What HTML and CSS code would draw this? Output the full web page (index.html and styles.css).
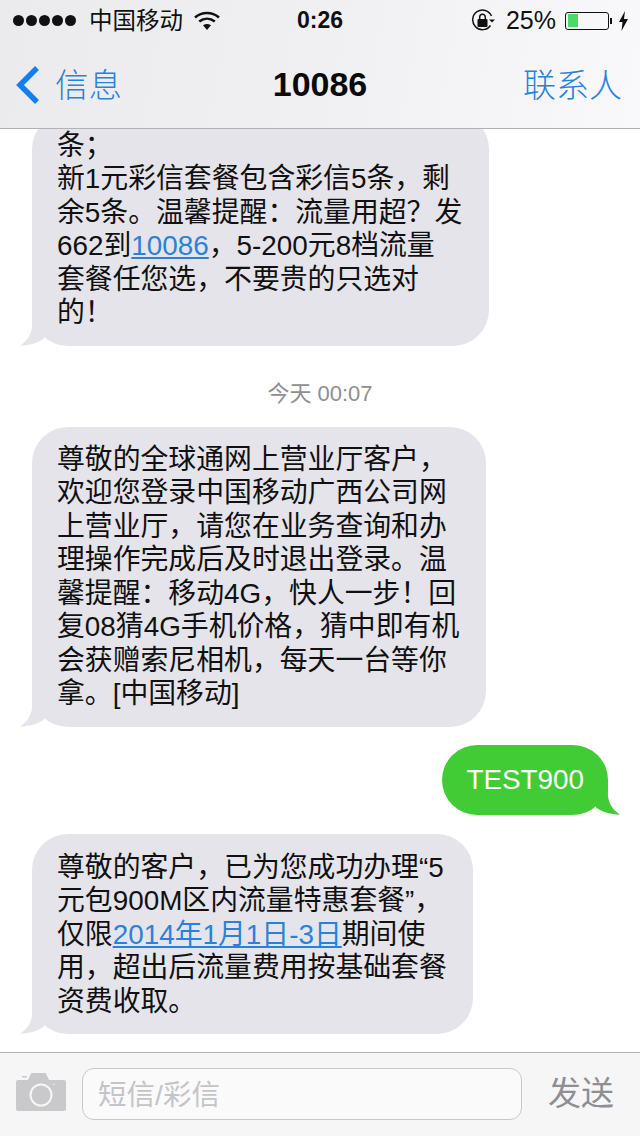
FILE: index.html
```html
<!DOCTYPE html>
<html lang="zh">
<head>
<meta charset="utf-8">
<title>10086</title>
<link rel="stylesheet" href="styles.css">
</head>
<body>
<div class="screen">
  <header class="top">
    <div class="status">
      <div class="status-left">
        <div class="dots"><i></i><i></i><i></i><i></i><i></i></div>
        <span class="carrier">中国移动</span>
        <svg class="wifi" width="26" height="20" viewBox="0 0 26 20"><path d="M1 6.500C8 .5 18 .5 25 6.500" fill="none" stroke="#111" stroke-width="2.600"/><path d="M5.200 10.600c4.800-3.900 10.800-3.900 15.600 0" fill="none" stroke="#111" stroke-width="2.600"/><path d="M9 14.200c2.600-1.700 5.400-1.700 8 0L13 19z" fill="#111"/></svg>
      </div>
      <span class="time">0:26</span>
      <div class="status-right">
        <svg class="lock" width="24" height="24" viewBox="0 0 24 24"><path d="M19.500 16.500A9.800 9.800 0 1 1 20.500 7" fill="none" stroke="#111" stroke-width="1.500"/><path d="M18 10.500h6l-3 3z" fill="#111"/><rect x="6.500" y="10" width="10" height="8" rx="1" fill="#111"/><path d="M8.700 10V8a2.800 2.800 0 0 1 5.600 0v2" fill="none" stroke="#111" stroke-width="1.500"/></svg>
        <span class="percent">25%</span>
        <div class="battery"><div class="battery-level"></div></div>
        <div class="battery-tip"></div>
        <svg class="bolt" width="9" height="20" viewBox="0 0 9 20"><path d="M6 0 0 11h3.500L2.500 20 9 8H5z" fill="#111"/></svg>
      </div>
    </div>
    <nav class="nav">
      <div class="back">
        <svg width="28" height="40" viewBox="0 0 28 40"><path d="M23 3 6 20l17 17" fill="none" stroke="#127ff0" stroke-width="5.500"/></svg>
        <span>信息</span>
      </div>
      <div class="title">10086</div>
      <div class="contact">联系人</div>
    </nav>
  </header>

  <main class="thread">
    <div class="bubble in">条；<br>新1元彩信套餐包含彩信5条，剩<br>余5条。温馨提醒：流量用超？发<br>662到<a>10086</a>，5-200元8档流量<br>套餐任您选，不要贵的只选对<br>的！
      <svg class="tail tail-in" width="26" height="36" viewBox="0 0 26 36"><path d="M12 0V12C13 22 8 31 0 35.500 9 35.500 18 33 24 28.500V0z"/></svg>
    </div>
    <div class="stamp">今天 00:07</div>
    <div class="bubble in gap">尊敬的全球通网上营业厅客户，<br>欢迎您登录中国移动广西公司网<br>上营业厅，请您在业务查询和办<br>理操作完成后及时退出登录。温<br>馨提醒：移动4G，快人一步！回<br>复08猜4G手机价格，猜中即有机<br>会获赠索尼相机，每天一台等你<br>拿。[中国移动]
      <svg class="tail tail-in" width="26" height="36" viewBox="0 0 26 36"><path d="M12 0V12C13 22 8 31 0 35.500 9 35.500 18 33 24 28.500V0z"/></svg>
    </div>
    <div class="bubble out">TEST900
      <svg class="tail tail-out" width="26" height="36" viewBox="0 0 26 36"><path d="M14 0V12C13 22 18 31 26 35.500 17 35.500 8 33 2 28.500V0z"/></svg>
    </div>
    <div class="bubble in last">尊敬的客户，已为您成功办理“5<br>元包900M区内流量特惠套餐”，<br>仅限<a>2014年1月1日-3日</a>期间使<br>用，超出后流量费用按基础套餐<br>资费收取。
      <svg class="tail tail-in" width="26" height="36" viewBox="0 0 26 36"><path d="M12 0V12C13 22 8 31 0 35.500 9 35.500 18 33 24 28.500V0z"/></svg>
    </div>
  </main>

  <footer class="composer">
    <svg class="camera" width="50" height="38" viewBox="0 0 50 38"><path fill-rule="evenodd" fill="#c9c9cb" d="M6 3h5v1.500H6zM2 7h10l3-6.500q.3-.5 1-.5h13q.7 0 1 .5L33 7h15a2 2 0 0 1 2 2v27a2 2 0 0 1-2 2H2a2 2 0 0 1-2-2V9a2 2 0 0 1 2-2zM25 10.500a11.500 11.500 0 1 0 0 23 11.500 11.500 0 0 0 0-23zM25 12.500a9.500 9.500 0 1 1 0 19 9.500 9.500 0 0 1 0-19zM38 10.500a.8.8 0 1 0 0 1.600.8.8 0 0 0 0-1.600z"/></svg>
    <div class="field">短信/彩信</div>
    <div class="send">发送</div>
  </footer>
</div>
</body>
</html>
```
FILE: styles.css
```css
* { box-sizing: border-box; }
html, body { margin: 0; padding: 0; background: #fff; }
body { font-family: "Liberation Sans", "Noto Sans CJK SC", sans-serif; }
.screen { width: 640px; height: 1136px; display: flex; flex-direction: column; overflow: hidden; background: #fff; }

.top { height: 129px; flex: none; position: relative; z-index: 2; background: linear-gradient(100deg, #ebebed 0%, #f0f0f2 50%, #f9f9fb 100%); border-bottom: 1px solid #b2b2b4; }
.status { height: 41px; display: flex; align-items: center; justify-content: space-between; position: relative; padding: 0 12px 0 13px; color: #111; }
.status-left, .status-right { display: flex; align-items: center; }
.dots { display: flex; gap: 2px; margin-right: 13px; }
.dots i { width: 11px; height: 11px; border-radius: 50%; background: #111; }
.carrier { font-size: 23.500px; line-height: 28px; margin-right: 11px; }
.wifi { display: block; }
.time { position: absolute; left: 0; right: 0; text-align: center; font-size: 23px; font-weight: 700; pointer-events: none; }
.lock { margin-right: 11px; }
.percent { font-size: 25px; margin-right: 9px; }
.battery { width: 44px; height: 18px; border: 1.500px solid #111; border-radius: 3px; padding: 1.500px; }
.battery-level { width: 10px; height: 100%; background: #4cd964; }
.battery-tip { width: 2px; height: 6px; background: #111; margin: 0 7px 0 1px; }
.bolt { display: block; }

.nav { height: 87px; display: flex; align-items: center; justify-content: space-between; position: relative; padding: 0 18px 0 16px; }
.back { display: flex; align-items: center; color: #2a82d8; font-size: 33.500px; gap: 13px; }
.back span { margin-bottom: 4px; font-weight: 300; }
.back svg { display: block; margin-left: -2px; }
.title { position: absolute; left: 0; right: 0; text-align: center; font-size: 34px; font-weight: 700; color: #0a0a0a; }
.contact { color: #2a82d8; font-size: 33px; position: relative; margin-bottom: 4px; font-weight: 300; }

.thread { flex: 1; min-height: 0; display: flex; flex-direction: column; justify-content: flex-end; padding: 0 32px 18px; }
.bubble { flex: none; position: relative; font-size: 27.850px; line-height: 33.500px; padding: 16px 26.500px 16px 25px; border-radius: 36px; white-space: nowrap; color: #111; }
.in { align-self: flex-start; background: #e5e4ea; }
.in a { color: #2a82d8; text-decoration: underline; }
.gap { margin-bottom: 18px; }
.out { align-self: flex-end; background: #41cc36; color: #fff; padding: 18.250px 24px; margin-bottom: 19px; }
.last { padding-top: 17px; }
.tail { position: absolute; bottom: 0; }
.tail-in { left: -12px; fill: #e5e4ea; }
.tail-out { right: -12px; fill: #41cc36; }
.stamp { flex: none; text-align: center; color: #8e8e93; font-size: 22px; line-height: 26px; margin: 35px 0 20px; }

.composer { height: 84px; flex: none; display: flex; align-items: flex-start; background: #f6f6f7; border-top: 1px solid #b2b2b4; padding: 15px 26px 0 16px; }
.camera { display: block; margin-top: 5px; }
.field { width: 440px; height: 52px; margin-left: 16px; border: 1px solid #c8c8cc; border-radius: 12px; background: #fafafb; color: #c4c4c8; font-size: 28.500px; line-height: 52px; padding-left: 15px; }
.send { margin-left: 26px; color: #8e8e93; font-size: 33px; line-height: 52px; }
```
